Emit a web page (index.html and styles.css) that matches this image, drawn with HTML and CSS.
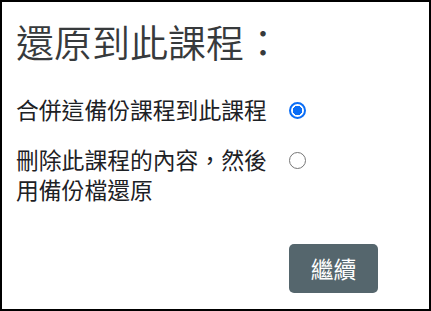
FILE: index.html
```html
<!DOCTYPE html>
<html lang="zh-Hant">
<head>
    <meta charset="UTF-8">
    <title>還原到此課程</title>
    <link rel="stylesheet" href="styles.css">
</head>
<body>
<div class="panel">
    <h2 class="title">還原到此課程：</h2>
    <form class="options">
        <label class="optLabel" for="merge">合併這備份課程到此課程</label>
        <input type="radio" id="merge" name="target" class="optRadio" checked>

        <label class="optLabel" for="replace">刪除此課程的內容，然後用備份檔還原</label>
        <input type="radio" id="replace" name="target" class="optRadio">

        <div class="actions">
            <button type="button" class="continueBtn">繼續</button>
        </div>
    </form>
</div>
</body>
</html>
```

FILE: styles.css
```css
html, body {
    margin: 0;
    padding: 0;
    background: #ffffff;
}

body {
    font-family: "Noto Sans CJK TC", "Noto Sans", sans-serif;
    color: #1d2125;
}

.panel {
    box-sizing: border-box;
    width: 431px;
    height: 311px;
    border: 2px solid #000000;
    padding: 16px 14px 0 14px;
}

.title {
    margin: 0;
    font-size: 38px;
    font-weight: 350;
    line-height: 1.2;
    color: #373a3c; /* slightly softer than body text */
}

.options {
    display: grid;
    grid-template-columns: 273px auto;
    row-gap: 20px;
    margin-top: 31px;
}

.optLabel {
    font-size: 22.8px;
    line-height: 30px;
    width: 256px;
}

.optRadio {
    appearance: none;
    -webkit-appearance: none;
    display: block;
    box-sizing: border-box;
    width: 17px;
    height: 17px;
    min-width: 17px;
    margin: 7px 0 0 0;
    padding: 0;
    justify-self: start;
    border: 1.5px solid #767676;
    border-radius: 50%;
    background: #ffffff;
}

.optRadio:checked {
    border: 2px solid #0b6ef6;
    background: radial-gradient(circle, #0b6ef6 0 4.5px, #ffffff 5px);
}

.actions {
    grid-column: 2;
    margin-top: 19px;
}

.continueBtn {
    width: 89px;
    height: 49px;
    background-color: #55666d;
    color: #ffffff;
    border: none;
    border-radius: 5px;
    font-family: inherit;
    font-size: 22.8px;
    padding: 0;
    cursor: pointer;
}
```
